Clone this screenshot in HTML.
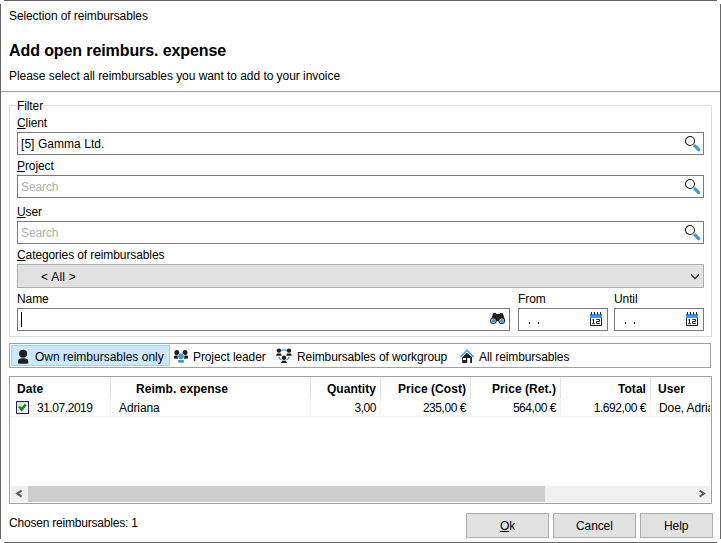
<!DOCTYPE html>
<html><head><meta charset="utf-8">
<style>
*{margin:0;padding:0;box-sizing:border-box}
html,body{width:721px;height:543px;overflow:hidden;background:#fff}
body{position:relative;font-family:"Liberation Sans",sans-serif;font-size:12px;color:#000}
.a{position:absolute}
.t{position:absolute;margin-top:1px;line-height:15px;white-space:nowrap;letter-spacing:-0.1px}
.b{font-weight:bold;letter-spacing:0.05px}
.u{text-decoration:underline;text-underline-offset:1px}
.box{position:absolute;border:1px solid #7a7a7a;background:#fff}
.ph{color:#b0b0b0}
.r{text-align:right}
.n{letter-spacing:-0.45px}
.btn{position:absolute;background:#e1e1e1;border:1px solid #adadad}
</style></head><body>

<!-- outer window border -->
<div class="a" style="left:4px;top:0;width:713px;height:1px;background:#666"></div>
<div class="a" style="left:4px;top:542px;width:713px;height:1px;background:#666"></div>
<div class="a" style="left:0;top:4px;width:1px;height:535px;background:#666"></div>
<div class="a" style="left:720px;top:4px;width:1px;height:535px;background:#666"></div>

<div class="t" style="left:9px;top:8px">Selection of reimbursables</div>
<div class="t b" style="left:9px;top:41px;font-size:16px;line-height:18px;letter-spacing:-0.1px">Add open reimburs. expense</div>
<div class="t" style="left:9px;top:68px;letter-spacing:-0.05px">Please select all reimbursables you want to add to your invoice</div>

<div class="a" style="left:1px;top:91px;width:719px;height:1px;background:#a0a0a0"></div>

<!-- group box -->
<div class="a" style="left:9px;top:105px;width:703px;height:232px;border:1px solid #dcdcdc"></div>
<div class="t" style="left:17px;top:98px;background:#fff;padding:0">Filter</div>

<div class="t" style="left:17px;top:115px"><span class="u">C</span>lient</div>
<div class="box" style="left:17px;top:132px;width:687px;height:23px"></div>
<div class="t" style="left:21px;top:136px;letter-spacing:0.05px">[5] Gamma Ltd.</div>

<div class="t" style="left:17px;top:158px"><span class="u">P</span>roject</div>
<div class="box" style="left:17px;top:175px;width:687px;height:23px"></div>
<div class="t ph" style="left:21px;top:179px">Search</div>

<div class="t" style="left:17px;top:204px"><span class="u">U</span>ser</div>
<div class="box" style="left:17px;top:221px;width:687px;height:23px"></div>
<div class="t ph" style="left:21px;top:225px">Search</div>

<div class="t" style="left:17px;top:247px"><span class="u">C</span>ategories of reimbursables</div>
<div class="btn" style="left:17px;top:264px;width:687px;height:24px"></div>
<div class="t" style="left:41px;top:269px;letter-spacing:0.25px">&lt; All &gt;</div>

<div class="t" style="left:17px;top:291px">Name</div>
<div class="t" style="left:518px;top:291px">From</div>
<div class="t" style="left:614px;top:291px">Until</div>
<div class="box" style="left:17px;top:308px;width:493px;height:23px"></div>
<div class="a" style="left:21px;top:312px;width:1px;height:15px;background:#000"></div>
<div class="box" style="left:518px;top:308px;width:90px;height:23px"></div>
<div class="box" style="left:614px;top:308px;width:90px;height:23px"></div>

<!-- toolbar -->
<div class="a" style="left:9px;top:343px;width:702px;height:25px;border:1px solid #a0a0a0"></div>
<div class="a" style="left:11px;top:345px;width:159px;height:21px;background:#cce8ff;border:1px solid #99d1ff"></div>
<div class="t" style="left:35px;top:349px;letter-spacing:0px">Own reimbursables only</div>
<div class="t" style="left:193px;top:349px">Project leader</div>
<div class="t" style="left:297px;top:349px">Reimbursables of workgroup</div>
<div class="t" style="left:479px;top:349px">All reimbursables</div>

<!-- grid -->
<div class="a" style="left:9px;top:376px;width:703px;height:128px;border:1px solid #a0a0a8"></div>
<div class="t b" style="left:17px;top:381px">Date</div>
<div class="t b" style="left:136px;top:381px">Reimb. expense</div>
<div class="t b r" style="left:310px;top:381px;width:66px">Quantity</div>
<div class="t b r" style="left:380px;top:381px;width:86px">Price (Cost)</div>
<div class="t b r" style="left:470px;top:381px;width:86px">Price (Ret.)</div>
<div class="t b r" style="left:560px;top:381px;width:86px">Total</div>
<div class="t b" style="left:658px;top:381px">User</div>

<div class="t n" style="left:37px;top:400px">31.07.2019</div>
<div class="t" style="left:119px;top:400px">Adriana</div>
<div class="t n r" style="left:310px;top:400px;width:66px">3,00</div>
<div class="t n r" style="left:380px;top:400px;width:86px">235,00 €</div>
<div class="t n r" style="left:470px;top:400px;width:86px">564,00 €</div>
<div class="t n r" style="left:560px;top:400px;width:86px">1.692,00 €</div>
<div class="a" style="left:659px;top:400px;width:51px;height:16px;overflow:hidden"><div class="t" style="left:0;top:0">Doe, Adriana</div></div>

<!-- scrollbar -->
<div class="a" style="left:11px;top:486px;width:699px;height:16px;background:#f0f0f0"></div>
<div class="a" style="left:28px;top:486px;width:517px;height:16px;background:#cdcdcd"></div>

<div class="t" style="left:9px;top:515px;letter-spacing:-0.2px">Chosen reimbursables: 1</div>

<div class="btn" style="left:466px;top:513px;width:83px;height:25px"></div>
<div class="t" style="left:500px;top:518px"><span class="u">O</span>k</div>
<div class="btn" style="left:553px;top:513px;width:83px;height:25px"></div>
<div class="t" style="left:576px;top:518px">Cancel</div>
<div class="btn" style="left:640px;top:513px;width:73px;height:25px"></div>
<div class="t" style="left:664px;top:518px">Help</div>

<svg class="a" style="left:683px;top:134px" width="20" height="20" viewBox="0 0 20 20"><circle cx="7" cy="7" r="4.5" fill="none" stroke="#1e1e1e" stroke-width="1.1"/><line x1="11.9" y1="11.9" x2="15.7" y2="15.7" stroke="#3a96dd" stroke-width="3.2" stroke-linecap="round"/></svg>
<svg class="a" style="left:683px;top:177px" width="20" height="20" viewBox="0 0 20 20"><circle cx="7" cy="7" r="4.5" fill="none" stroke="#1e1e1e" stroke-width="1.1"/><line x1="11.9" y1="11.9" x2="15.7" y2="15.7" stroke="#3a96dd" stroke-width="3.2" stroke-linecap="round"/></svg>
<svg class="a" style="left:683px;top:223px" width="20" height="20" viewBox="0 0 20 20"><circle cx="7" cy="7" r="4.5" fill="none" stroke="#1e1e1e" stroke-width="1.1"/><line x1="11.9" y1="11.9" x2="15.7" y2="15.7" stroke="#3a96dd" stroke-width="3.2" stroke-linecap="round"/></svg>
<svg class="a" style="left:689px;top:272px" width="12" height="9"><polyline points="2,2.5 6,6.5 10,2.5" fill="none" stroke="#333" stroke-width="1.3"/></svg>
<svg class="a" style="left:487px;top:309px" width="22" height="18" viewBox="0 0 22 18"><path d="M3.8,12 L5.8,5.2 Q6.2,4 7.2,4 L8.6,4 Q9.2,4 9.4,5 L12.6,5 Q12.8,4 13.4,4 L14.8,4 Q15.8,4 16.2,5.2 L18.2,12 Z" fill="#1e1e1e"/><circle cx="6.4" cy="11.7" r="3.3" fill="#1e1e1e"/><circle cx="14.7" cy="11.7" r="3.3" fill="#1e1e1e"/><circle cx="6.4" cy="11.7" r="2.3" fill="#e8f3fb"/><circle cx="14.7" cy="11.7" r="2.3" fill="#e8f3fb"/><circle cx="6.6" cy="11.9" r="1.8" fill="#3a96dd"/><circle cx="14.9" cy="11.9" r="1.8" fill="#3a96dd"/></svg>
<svg class="a" style="left:589px;top:311px" width="14" height="16" viewBox="0 0 14 16"><rect x="1" y="3" width="12" height="4" fill="#3a96dd"/><rect x="2" y="1" width="1" height="3" fill="#222"/><rect x="5" y="1" width="1" height="3" fill="#222"/><rect x="8" y="1" width="1" height="3" fill="#222"/><rect x="11" y="1" width="1" height="3" fill="#222"/><path d="M1.5,7 V14.5 H12.5 V7" fill="#fff" stroke="#222" stroke-width="1"/><path d="M3.2,9 L4.5,8.3 V12.7 M3.2,12.7 H5.8" fill="none" stroke="#222" stroke-width="1"/><path d="M7.3,8.5 H10.5 V10.5 H7.5 V12.5 H10.8" fill="none" stroke="#222" stroke-width="1"/></svg>
<svg class="a" style="left:685px;top:311px" width="14" height="16" viewBox="0 0 14 16"><rect x="1" y="3" width="12" height="4" fill="#3a96dd"/><rect x="2" y="1" width="1" height="3" fill="#222"/><rect x="5" y="1" width="1" height="3" fill="#222"/><rect x="8" y="1" width="1" height="3" fill="#222"/><rect x="11" y="1" width="1" height="3" fill="#222"/><path d="M1.5,7 V14.5 H12.5 V7" fill="#fff" stroke="#222" stroke-width="1"/><path d="M3.2,9 L4.5,8.3 V12.7 M3.2,12.7 H5.8" fill="none" stroke="#222" stroke-width="1"/><path d="M7.3,8.5 H10.5 V10.5 H7.5 V12.5 H10.8" fill="none" stroke="#222" stroke-width="1"/></svg>
<div class="a" style="left:529px;top:322px;width:1px;height:2px;background:#300"></div>
<div class="a" style="left:538px;top:322px;width:1px;height:2px;background:#300"></div>
<div class="a" style="left:625px;top:322px;width:1px;height:2px;background:#300"></div>
<div class="a" style="left:634px;top:322px;width:1px;height:2px;background:#300"></div>
<svg class="a" style="left:14px;top:346px" width="18" height="20" viewBox="0 0 18 20"><circle cx="9.1" cy="7.8" r="4" fill="#1e1e1e"/><path d="M4,17.4 V15 Q4,12.4 9.1,12.3 Q14.2,12.4 14.2,15 V17.4 Q9.1,18 4,17.4 Z" fill="#1e1e1e"/></svg>
<svg class="a" style="left:171px;top:347px" width="20" height="19" viewBox="0 0 20 19"><circle cx="5.8" cy="5.4" r="2.5" fill="#1e1e1e"/><circle cx="14" cy="5.4" r="2.5" fill="#1e1e1e"/><rect x="3" y="8.4" width="5" height="3.4" rx="1.2" fill="#1e1e1e"/><rect x="12" y="8.4" width="5" height="3.4" rx="1.2" fill="#1e1e1e"/><circle cx="10" cy="9.4" r="3.4" fill="#fff"/><rect x="6.4" y="12.4" width="7.2" height="4" rx="1.5" fill="#fff"/><circle cx="10" cy="9.4" r="2.8" fill="#3a96dd"/><rect x="7" y="12.9" width="6.1" height="2.9" rx="1.1" fill="#3a96dd"/></svg>
<svg class="a" style="left:273px;top:346px" width="22" height="20" viewBox="0 0 22 20"><circle cx="11" cy="9.3" r="5.4" fill="none" stroke="#3a96dd" stroke-width="1.2"/><circle cx="5.9" cy="4.6" r="2.5" fill="#fff"/><path d="M2.3000000000000003,10.2 L3.2,7.199999999999999 H8.600000000000001 L9.5,10.2 Z" fill="#fff" stroke="#fff" stroke-width="0.9"/><circle cx="5.9" cy="4.6" r="2.2" fill="#1e1e1e"/><path d="M3.0000000000000004,9.8 L3.9000000000000004,7.6 H7.9 L8.8,9.8 Z" fill="#1e1e1e"/><circle cx="16" cy="4.6" r="2.5" fill="#fff"/><path d="M12.4,10.2 L13.3,7.199999999999999 H18.7 L19.6,10.2 Z" fill="#fff" stroke="#fff" stroke-width="0.9"/><circle cx="16" cy="4.6" r="2.2" fill="#1e1e1e"/><path d="M13.1,9.8 L14,7.6 H18 L18.9,9.8 Z" fill="#1e1e1e"/><circle cx="11" cy="11.8" r="2.5" fill="#fff"/><path d="M7.4,17.4 L8.3,14.4 H13.7 L14.6,17.4 Z" fill="#fff" stroke="#fff" stroke-width="0.9"/><circle cx="11" cy="11.8" r="2.2" fill="#1e1e1e"/><path d="M8.1,17.0 L9,14.8 H13 L13.9,17.0 Z" fill="#1e1e1e"/></svg>
<svg class="a" style="left:457px;top:346px" width="20" height="20" viewBox="0 0 20 20"><polyline points="3.3,11 10,4.3 16.7,11" fill="none" stroke="#3a96dd" stroke-width="1.4"/><path d="M5.2,16.9 V11.3 L10,6.8 L15,11.3 V16.9 Z" fill="#1e1e1e"/><rect x="6" y="12" width="3" height="2" fill="#fff"/><rect x="10.2" y="12" width="3" height="5" fill="#fff"/></svg>
<div class="a" style="left:110px;top:378px;width:1px;height:21px;background:#e0e0e0"></div>
<div class="a" style="left:110px;top:400px;width:1px;height:16px;background:repeating-linear-gradient(to bottom,#e9e9e9 0 1px,transparent 1px 2px)"></div>
<div class="a" style="left:310px;top:378px;width:1px;height:21px;background:#e0e0e0"></div>
<div class="a" style="left:310px;top:400px;width:1px;height:16px;background:repeating-linear-gradient(to bottom,#e9e9e9 0 1px,transparent 1px 2px)"></div>
<div class="a" style="left:380px;top:378px;width:1px;height:21px;background:#e0e0e0"></div>
<div class="a" style="left:380px;top:400px;width:1px;height:16px;background:repeating-linear-gradient(to bottom,#e9e9e9 0 1px,transparent 1px 2px)"></div>
<div class="a" style="left:470px;top:378px;width:1px;height:21px;background:#e0e0e0"></div>
<div class="a" style="left:470px;top:400px;width:1px;height:16px;background:repeating-linear-gradient(to bottom,#e9e9e9 0 1px,transparent 1px 2px)"></div>
<div class="a" style="left:560px;top:378px;width:1px;height:21px;background:#e0e0e0"></div>
<div class="a" style="left:560px;top:400px;width:1px;height:16px;background:repeating-linear-gradient(to bottom,#e9e9e9 0 1px,transparent 1px 2px)"></div>
<div class="a" style="left:650px;top:378px;width:1px;height:21px;background:#e0e0e0"></div>
<div class="a" style="left:650px;top:400px;width:1px;height:16px;background:repeating-linear-gradient(to bottom,#e9e9e9 0 1px,transparent 1px 2px)"></div>
<div class="a" style="left:10px;top:416px;width:700px;height:1px;background:repeating-linear-gradient(to right,#e9e9e9 0 1px,transparent 1px 2px)"></div>
<svg class="a" style="left:16px;top:401px" width="13" height="13" viewBox="0 0 13 13"><defs><linearGradient id="cg" x1="0" y1="0" x2="1" y2="1"><stop offset="0" stop-color="#dcdcdc"/><stop offset="1" stop-color="#fafafa"/></linearGradient></defs><rect x="0.5" y="0.5" width="12" height="12" fill="url(#cg)" stroke="#1b2466" stroke-width="1"/><polyline points="3.2,5.6 5.6,8.7 9.7,3.6" fill="none" stroke="#0a8a0a" stroke-width="2.4"/></svg>
<svg class="a" style="left:11px;top:486px" width="17" height="16"><polyline points="10.6,4.6 6.2,7.6 10.6,10.6" fill="none" stroke="#606060" stroke-width="2.2"/></svg>
<svg class="a" style="left:692px;top:486px" width="17" height="16"><polyline points="7.6,4.6 12,7.6 7.6,10.6" fill="none" stroke="#606060" stroke-width="2.2"/></svg>
</body></html>
